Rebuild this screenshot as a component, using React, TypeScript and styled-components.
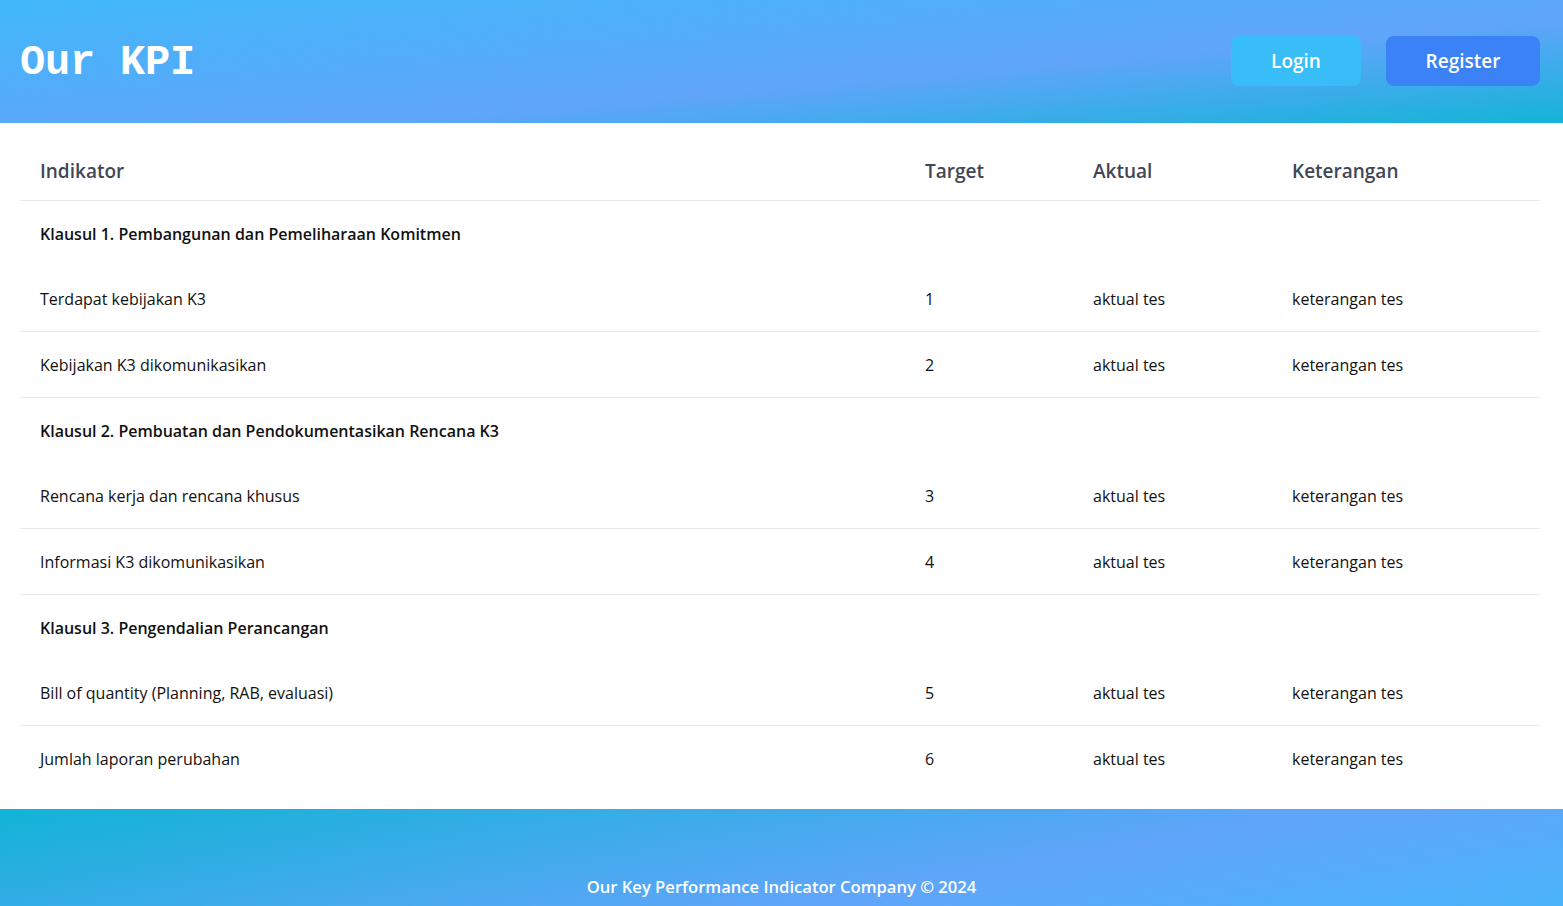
import React from "react";
import styled, { createGlobalStyle } from "styled-components";

const GlobalStyle = createGlobalStyle`
  html, body { margin: 0; padding: 0; background: #ffffff; }
  body { font-family: "Open Sans", "Noto Sans", sans-serif; }
  * { box-sizing: border-box; }
`;

const Header = styled.header`
  display: flex;
  align-items: center;
  justify-content: space-between;
  height: 123px;
  padding: 0 23px 0 20px;
  background: linear-gradient(175deg, #40b7f9 0%, #60a5fa 60%, #14b4d8 100%);
`;

const Title = styled.h1`
  margin: 3px 0 0;
  font-family: "Liberation Mono", "DejaVu Sans Mono", monospace;
  font-weight: 700;
  font-size: 42px;
  color: #ffffff;
  letter-spacing: -0.2px;
`;

const Actions = styled.div`
  display: flex;
  gap: 25px;
  margin-top: -1px;
`;

const Button = styled.button<{ $variant: "light" | "dark"; $w: number }>`
  width: ${(p) => p.$w}px;
  height: 50px;
  border: none;
  border-radius: 8px;
  background: ${(p) => (p.$variant === "light" ? "#38bdf8" : "#3b82f6")};
  color: #ffffff;
  font-family: "Open Sans", sans-serif;
  font-weight: 600;
  font-size: 19px;
  cursor: pointer;
`;

const Main = styled.main`
  padding: 17px 23px 18px 20px;
`;

const Table = styled.table`
  width: 100%;
  border-collapse: collapse;
  table-layout: fixed;
`;

const HeadCell = styled.th`
  text-align: left;
  padding: 17px 20px 15px;
  font-size: 19px;
  line-height: 28px;
  font-weight: 600;
  color: #3f4756;
  border-bottom: 1px solid #e5e7eb;
`;

const Row = styled.tr<{ $border?: boolean }>`
  border-bottom: ${(p) => (p.$border ? "1px solid #e5e7eb" : "none")};
`;

const Cell = styled.td<{ $bold?: boolean }>`
  padding: 21px 20px 19px;
  line-height: 25px;
  font-size: 16px;
  color: #111111;
  font-weight: ${(p) => (p.$bold ? 600 : 400)};
  white-space: nowrap;
`;

const Footer = styled.footer`
  padding: 64px 20px;
  text-align: center;
  background: linear-gradient(170deg, #12b3d6 0%, #60a5fa 55%, #3fb8f9 100%);
  color: #ffffff;
  font-weight: 600;
  font-size: 16.6px;
  line-height: 28px;
`;

type Item = { name: string; target: string };
type Group = { title: string; items: Item[] };

const groups: Group[] = [
  {
    title: "Klausul 1. Pembangunan dan Pemeliharaan Komitmen",
    items: [
      { name: "Terdapat kebijakan K3", target: "1" },
      { name: "Kebijakan K3 dikomunikasikan", target: "2" },
    ],
  },
  {
    title: "Klausul 2. Pembuatan dan Pendokumentasikan Rencana K3",
    items: [
      { name: "Rencana kerja dan rencana khusus", target: "3" },
      { name: "Informasi K3 dikomunikasikan", target: "4" },
    ],
  },
  {
    title: "Klausul 3. Pengendalian Perancangan",
    items: [
      { name: "Bill of quantity (Planning, RAB, evaluasi)", target: "5" },
      { name: "Jumlah laporan perubahan", target: "6" },
    ],
  },
];

export default function App() {
  return (
    <>
      <GlobalStyle />
      <Header>
        <Title>Our KPI</Title>
        <Actions>
          <Button $variant="light" $w={130}>Login</Button>
          <Button $variant="dark" $w={154}>Register</Button>
        </Actions>
      </Header>
      <Main>
        <Table>
          <colgroup>
            <col style={{ width: 885 }} />
            <col style={{ width: 168 }} />
            <col style={{ width: 199 }} />
            <col />
          </colgroup>
          <thead>
            <tr>
              <HeadCell>Indikator</HeadCell>
              <HeadCell>Target</HeadCell>
              <HeadCell>Aktual</HeadCell>
              <HeadCell>Keterangan</HeadCell>
            </tr>
          </thead>
          <tbody>
            {groups.map((g, gi) => (
              <React.Fragment key={g.title}>
                <Row>
                  <Cell $bold colSpan={4}>{g.title}</Cell>
                </Row>
                {g.items.map((it, ii) => (
                  <Row key={it.name} $border={!(gi === groups.length - 1 && ii === g.items.length - 1)}>
                    <Cell>{it.name}</Cell>
                    <Cell>{it.target}</Cell>
                    <Cell>aktual tes</Cell>
                    <Cell>keterangan tes</Cell>
                  </Row>
                ))}
              </React.Fragment>
            ))}
          </tbody>
        </Table>
      </Main>
      <Footer>Our Key Performance Indicator Company © 2024</Footer>
    </>
  );
}
